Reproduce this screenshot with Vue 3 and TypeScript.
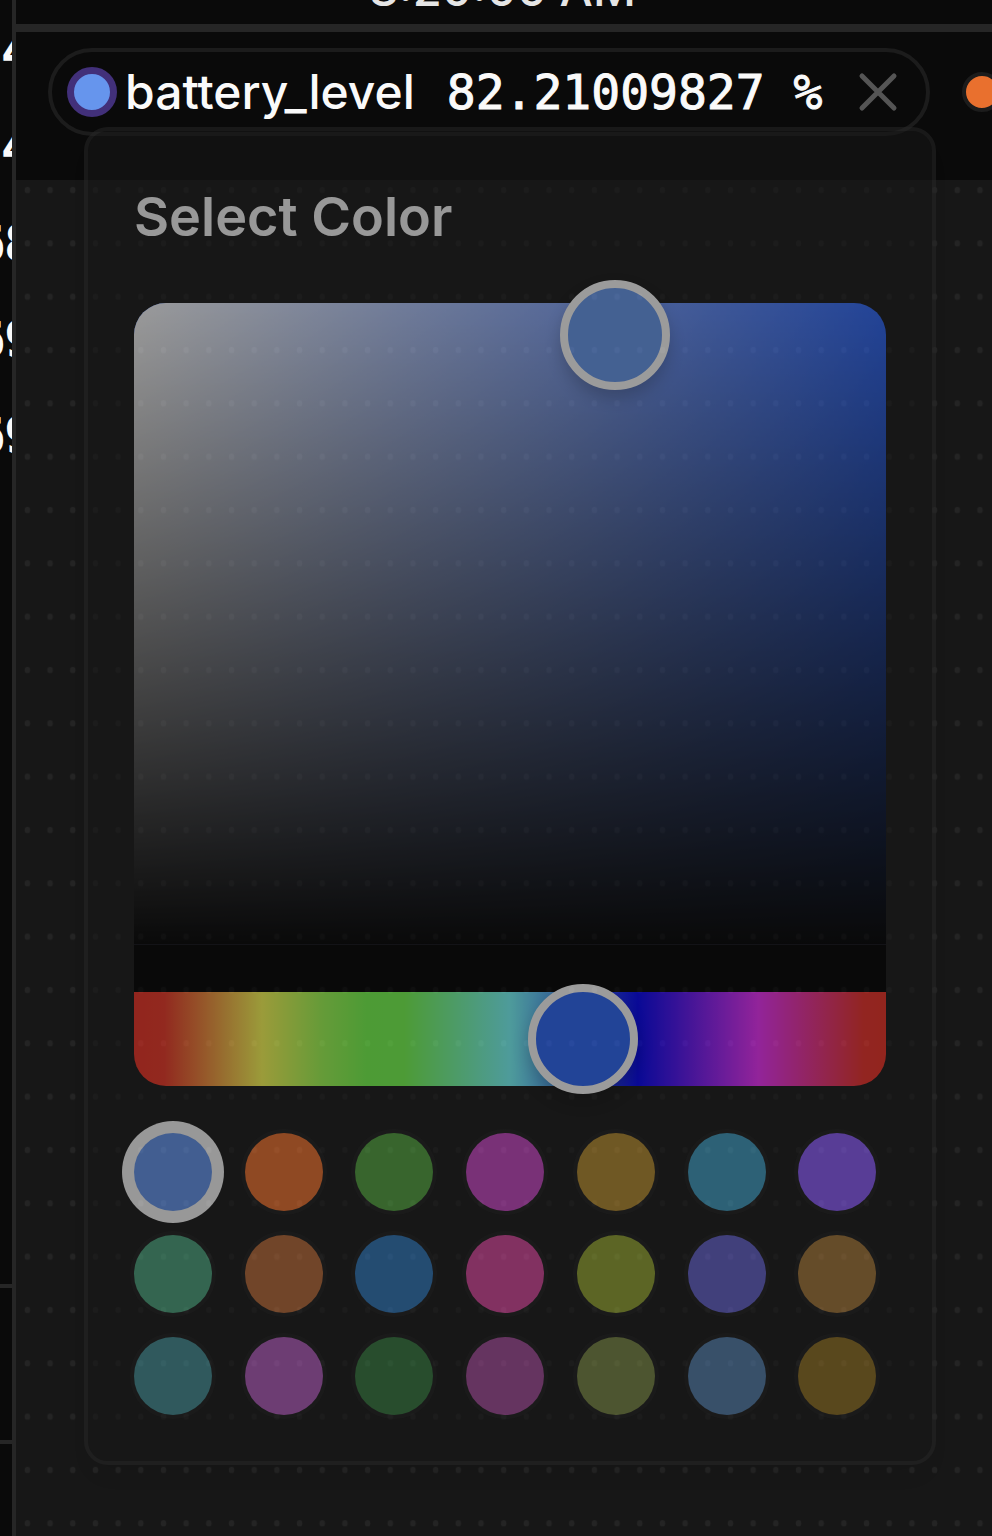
<script setup lang="ts">
import { computed, ref } from 'vue'

interface Reading { id: number; text: string; wide: boolean }

const readings: Reading[] = [
  { id: 1, text: '4', wide: false },
  { id: 2, text: '4', wide: false },
  { id: 3, text: '68', wide: true },
  { id: 4, text: '69', wide: true },
  { id: 5, text: '69', wide: true },
]

const swatches: string[] = [
  '#6495ed', '#eb702d', '#51a13f', '#c446c1', '#b3892e', '#3f9abe', '#895bf6',
  '#4aa17b', '#b66938', '#2e74b6', '#d3469a', '#90a131', '#625fc8', '#a17438',
  '#438c93', '#af5bba', '#35773f', '#a14a97', '#778543', '#517ba8', '#8c6d23',
]

const selected = ref<string>('#6495ed')
const hue = ref<number>(221)
const saturation = ref<number>(64)
const brightness = ref<number>(95)

const pointerStyle = computed(() => ({
  left: `${saturation.value}%`,
  top: `${100 - brightness.value}%`,
}))
</script>

<template>
  <div class="app">
    <aside class="sidebar">
      <ul class="readings">
        <li v-for="r in readings" :key="r.id" :class="{ wide: r.wide }">{{ r.text }}</li>
      </ul>
      <div class="side-cell"></div>
      <div class="side-rest"></div>
    </aside>

    <main class="panel">
      <header class="timebar"><time>8:20:00 AM</time></header>

      <div class="legend">
        <div class="chip">
          <button class="color-dot" type="button" aria-label="Select color" aria-expanded="true"></button>
          <span class="name">battery_level</span>
          <span class="value">82.21009827 %</span>
          <button class="close" type="button" aria-label="Remove series">
            <svg viewBox="0 0 40 40" aria-hidden="true">
              <path d="M4 4L36 36M36 4L4 36" fill="none" stroke="#555" stroke-width="5" stroke-linecap="round" />
            </svg>
          </button>

          <section class="popover" aria-labelledby="picker-title">
            <h2 id="picker-title">Select Color</h2>
            <div class="picker">
              <div class="saturation">
                <div
                  class="pointer"
                  role="slider"
                  tabindex="0"
                  aria-label="Color"
                  :aria-valuenow="saturation"
                  :style="pointerStyle"
                ></div>
              </div>
              <div class="hue">
                <input v-model.number="hue" type="range" min="0" max="360" aria-label="Hue" />
              </div>
            </div>
            <div class="swatches" role="radiogroup" aria-label="Preset colors">
              <input
                v-for="c in swatches"
                :key="c"
                v-model="selected"
                type="radio"
                name="swatch"
                :value="c"
                :aria-label="c"
                :style="{ backgroundColor: c }"
              />
            </div>
          </section>
        </div>
        <button class="color-dot next" type="button" aria-label="Select color"></button>
      </div>

      <div class="plot">
        <svg class="grid-dots" width="100%" height="100%" aria-hidden="true">
          <defs>
            <pattern id="dots" width="22.68" height="53.33" patternUnits="userSpaceOnUse">
              <ellipse cx="11.4" cy="10" rx="2.7" ry="3.2" fill="#242424" />
            </pattern>
          </defs>
          <rect width="100%" height="100%" fill="url(#dots)" />
        </svg>
      </div>
    </main>
  </div>
</template>

<style>
body {
  margin: 0;
  background: #0a0a0a;
}
</style>

<style scoped>
* {
  box-sizing: border-box;
}
.app {
  display: flex;
  min-height: 100vh;
  overflow: hidden;
  background: #0a0a0a;
  color: #fafafa;
  font-family: Inter, "Liberation Sans", sans-serif;
}
button {
  padding: 0;
  border: 0;
  background: none;
}
.sidebar {
  display: flex;
  flex-direction: column;
  flex: 0 0 16px;
  overflow: hidden;
  border-right: 4px solid #262626;
}
.readings {
  flex: 1;
  margin: 0;
  padding: 3px 0 0 2px;
  list-style: none;
  font-family: "DejaVu Sans Mono", monospace;
  font-size: 48px;
  line-height: 96px;
  white-space: nowrap;
  -webkit-text-stroke: 2px #fafafa;
}
.readings li {
  height: 96px;
}
.readings .wide {
  display: flex;
  justify-content: flex-end;
  width: 32px;
}
.side-cell {
  height: 160px;
  border: solid #262626;
  border-width: 4px 0;
}
.side-rest {
  height: 92px;
}
.panel {
  display: flex;
  flex: 1;
  flex-direction: column;
  min-width: 0;
}
.timebar {
  display: flex;
  align-items: flex-end;
  height: 32px;
  padding-left: 353px;
  overflow: hidden;
  border-bottom: 8px solid #262626;
  color: #e5e5e5;
  font-size: 47px;
  font-weight: 500;
  line-height: 56px;
  white-space: nowrap;
}
.timebar time {
  padding-bottom: 7px;
}
.legend {
  display: flex;
  align-items: center;
  gap: 32px;
  height: 148px;
  padding: 0 0 28px 32px;
}
.chip {
  position: relative;
  display: flex;
  flex: none;
  align-items: center;
  height: 88px;
  padding: 0 28px 0 15px;
  border: 4px solid #1c1c1c;
  border-radius: 44px;
  font-size: 48px;
  line-height: 56px;
  white-space: nowrap;
}
.color-dot {
  flex: none;
  width: 50px;
  height: 50px;
  border: 7px solid #42307a;
  border-radius: 50%;
  background: #6695ed;
}
.color-dot.next {
  width: 40px;
  height: 40px;
  border: 4px solid #1c1c1c;
  background: #e9702e;
}
.name {
  margin-left: 8px;
  font-weight: 500;
}
.value {
  margin-left: 32px;
  font-family: "DejaVu Sans Mono", monospace;
  -webkit-text-stroke: 1px #fafafa;
}
.close {
  width: 40px;
  height: 40px;
  margin-left: 36px;
}
.close svg {
  display: block;
}
.popover {
  position: absolute;
  z-index: 2;
  top: 75px;
  left: 32px;
  width: 852px;
  padding: 46px;
  border: 4px solid #262626;
  border-radius: 24px;
  background: #171717;
  box-shadow: 0 16px 24px -12px rgba(0, 0, 0, 0.1);
  opacity: 0.57;
}
h2 {
  margin: 0 0 46px;
  color: #fafafa;
  font-size: 54px;
  font-weight: 600;
  line-height: 80px;
}
.saturation {
  position: relative;
  height: 689px;
  border-bottom: 47px solid #000;
  border-radius: 32px 32px 0 0;
  background:
    linear-gradient(#101018, #101018) bottom / 100% 1px no-repeat,
    linear-gradient(to top, #000, transparent),
    linear-gradient(to right, #fff, rgba(255, 255, 255, 0)),
    #2c66f9;
}
.pointer {
  position: absolute;
  width: 110px;
  height: 110px;
  transform: translate(-50%, -50%);
  border: 8px solid #fff;
  border-radius: 50%;
  background: #6799f0;
  box-shadow: 0 8px 16px rgba(0, 0, 0, 0.2);
}
.hue {
  height: 94px;
  border-radius: 0 0 32px 32px;
  background: linear-gradient(
    to right,
    #ef3124,
    #ef3726 4%,
    #ffff55 17%,
    #a1ff52 25%,
    #76ff4d 31%,
    #76ff4f 36%,
    #78ffff 50%,
    #0000f6 67%,
    #ef2efd 83%,
    #ef3129 97%,
    #ef3124
  );
}
.hue input {
  display: block;
  position: relative;
  top: -8px;
  width: 100%;
  height: 110px;
  margin: 0;
  appearance: none;
  background: none;
}
.hue input::-webkit-slider-thumb {
  width: 110px;
  height: 110px;
  appearance: none;
  border: 8px solid #fff;
  border-radius: 50%;
  background: #2c66f9;
  box-shadow: 0 8px 16px rgba(0, 0, 0, 0.2);
}
.swatches {
  display: grid;
  grid-template-columns: repeat(7, 1fr);
  gap: 24px 23px;
  padding-top: 47px;
}
.swatches input {
  width: 78px;
  height: 78px;
  margin: 0;
  appearance: none;
  border-radius: 50%;
  box-shadow: 0 0 0 4px #1e1e1e;
}
.swatches input:checked {
  box-shadow: 0 0 0 12px #fafafa;
}
.plot {
  flex: 1;
  position: relative;
  background: #171717;
}
.grid-dots {
  position: absolute;
  inset: 0;
}
</style>
